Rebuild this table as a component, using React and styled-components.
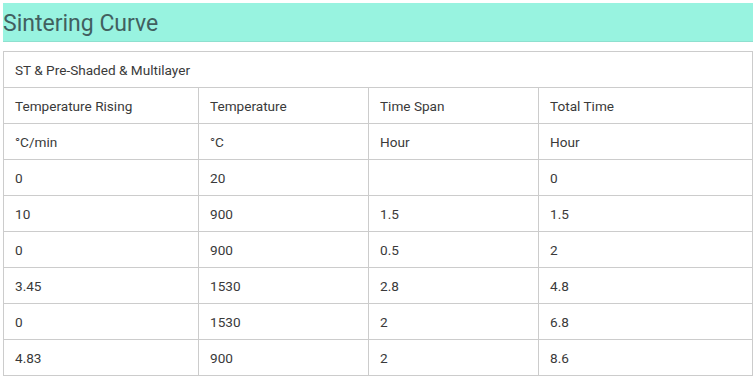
import React from 'react';
import styled, { createGlobalStyle } from 'styled-components';

const GlobalStyle = createGlobalStyle`
  body {
    margin: 0;
    background: #ffffff;
    font-family: Roboto, "Liberation Sans", sans-serif;
  }
`;

const Page = styled.div`
  padding: 3px 3px 0 3px;
  width: 750px;
`;

const TitleBar = styled.div`
  height: 38px;
  background-color: #98f3e0;
  border-bottom: 1px solid #8ee0cf;
  display: flex;
  align-items: center;
  margin-bottom: 9px;
`;

const Title = styled.h2`
  margin: 0;
  font-size: 23px;
  font-weight: 400;
  color: #41605f;
  line-height: 1;
  padding-top: 2px;
`;

const Table = styled.table`
  width: 750px;
  border-collapse: collapse;
  table-layout: fixed;
`;

const Cell = styled.td`
  height: 36px;
  padding: 0 11px;
  border: 1px solid #cccccc;
  font-size: 13.6px;
  color: #3a3a3a;
  vertical-align: middle;
  box-sizing: border-box;
`;

const headings = ['Temperature Rising', 'Temperature', 'Time Span', 'Total Time'];
const units = ['°C/min', '°C', 'Hour', 'Hour'];

const rows = [
  ['0', '20', '', '0'],
  ['10', '900', '1.5', '1.5'],
  ['0', '900', '0.5', '2'],
  ['3.45', '1530', '2.8', '4.8'],
  ['0', '1530', '2', '6.8'],
  ['4.83', '900', '2', '8.6'],
];

const App = () => {
  return (
    <Page>
      <GlobalStyle />
      <TitleBar>
        <Title>Sintering Curve</Title>
      </TitleBar>
      <Table>
        <colgroup>
          <col style={{ width: 195 }} />
          <col style={{ width: 170 }} />
          <col style={{ width: 170 }} />
          <col />
        </colgroup>
        <tbody>
          <tr>
            <Cell colSpan={4}>ST &amp; Pre-Shaded &amp; Multilayer</Cell>
          </tr>
          <tr>
            {headings.map(h => <Cell key={h}>{h}</Cell>)}
          </tr>
          <tr>
            {units.map((u, i) => <Cell key={i}>{u}</Cell>)}
          </tr>
          {rows.map((row, r) => (
            <tr key={r}>
              {row.map((v, c) => <Cell key={c}>{v}</Cell>)}
            </tr>
          ))}
        </tbody>
      </Table>
    </Page>
  );
};

export default App;
